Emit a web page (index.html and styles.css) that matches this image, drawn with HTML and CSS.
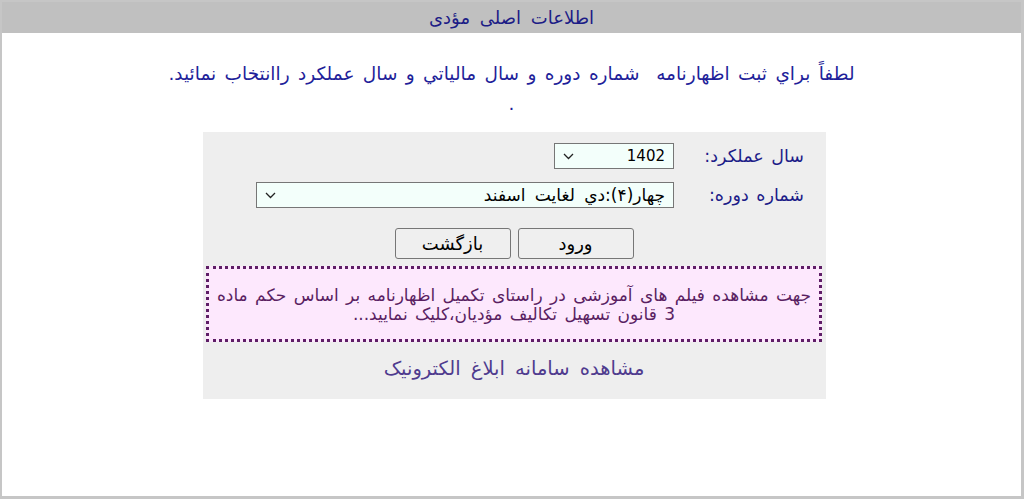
FILE: index.html
```html
<!DOCTYPE html>
<html lang="fa" dir="rtl">
<head>
<meta charset="utf-8">
<title>اطلاعات اصلی مؤدی</title>
<link rel="stylesheet" href="styles.css">
</head>
<body>
<div class="frame">
  <div class="header">اطلاعات اصلی مؤدی</div>
  <div class="intro">
    <p class="intro-line">لطفاً براي ثبت اظهارنامه&nbsp; شماره دوره و سال مالياتي و سال عملكرد راانتخاب نمائيد.</p>
    <p class="intro-dot">.</p>
  </div>
  <div class="panel">
    <div class="form-grid">
      <label class="label" for="year">سال عملكرد:</label>
      <div class="field">
        <div class="select-wrap year">
          <select id="year" class="select num"><option>1402</option></select>
          <svg class="chev" width="11" height="7" viewBox="0 0 11 7"><path d="M1 1 L5.5 5.5 L10 1" fill="none" stroke="#222" stroke-width="1.3"/></svg>
        </div>
      </div>
      <label class="label" for="period">شماره دوره:</label>
      <div class="field">
        <div class="select-wrap period">
          <select id="period" class="select fa"><option>چهار(۴):دي لغايت اسفند</option></select>
          <svg class="chev" width="11" height="7" viewBox="0 0 11 7"><path d="M1 1 L5.5 5.5 L10 1" fill="none" stroke="#222" stroke-width="1.3"/></svg>
        </div>
      </div>
    </div>
    <div class="buttons">
      <button class="btn" type="button">ورود</button>
      <button class="btn" type="button">بازگشت</button>
    </div>
    <div class="notice">جهت مشاهده فيلم های آموزشی در راستای تکميل اظهارنامه بر اساس حكم ماده<br>3 قانون تسهيل تكاليف مؤديان،كليک نماييد...</div>
    <div class="link">مشاهده سامانه ابلاغ الكترونيک</div>
  </div>
</div>
</body>
</html>
```
FILE: styles.css
```css
html, body {
  margin: 0;
  padding: 0;
  background: #ffffff;
}
body {
  font-family: "DejaVu Sans", "Liberation Sans", sans-serif;
}
.frame {
  box-sizing: border-box;
  width: 1024px;
  height: 499px;
  border: 2px solid #c6c6c6;
  border-right-width: 3px;
  border-bottom-width: 3px;
  background: #ffffff;
}
.header {
  background: #c0c0c0;
  height: 31px;
  line-height: 32px;
  text-align: center;
  color: #1c1c86;
  font-size: 18px;
  word-spacing: 4px;
}
.intro {
  text-align: center;
  color: #1f1f9a;
  font-size: 18.5px;
  word-spacing: 2.5px;
  padding-top: 26px;
  height: 99px;
  box-sizing: border-box;
}
.intro-line {
  margin: 0;
  line-height: 30px;
}
.intro-dot {
  margin: 0;
  line-height: 30px;
}
.panel {
  width: 623px;
  height: 267px;
  margin-right: 195px;
  margin-left: auto;
  background: #eeeeee;
  box-sizing: border-box;
  padding: 11px 4px 0 3px;
}
.form-grid {
  display: grid;
  grid-template-columns: 148px 1fr;
  row-gap: 13px;
  align-items: center;
}
.label {
  color: #1c1c88;
  font-size: 17.5px;
  word-spacing: 2px;
  padding-right: 18px;
  line-height: 26px;
}
.field {
  display: flex;
}
.select-wrap {
  position: relative;
  height: 26px;
}
.select-wrap.year { width: 120px; }
.select-wrap.period { width: 418px; }
.select {
  appearance: none;
  -webkit-appearance: none;
  box-sizing: border-box;
  width: 100%;
  height: 26px;
  border: 1px solid #767676;
  border-radius: 0;
  background: #f3fffb;
  color: #000;
  font-family: "DejaVu Sans", "Liberation Sans", sans-serif;
  padding: 0 8px 0 28px;
  direction: rtl;
}
.select.num { font-size: 15px; }
.select.fa { font-size: 17px; word-spacing: 4px; }
.chev {
  position: absolute;
  left: 9px;
  top: 10px;
}
.buttons {
  display: flex;
  justify-content: center;
  gap: 7px;
  margin-top: 20px;
}
.btn {
  width: 116px;
  height: 31px;
  box-sizing: border-box;
  border: 1px solid #767676;
  border-radius: 3px;
  background: #efefef;
  color: #000;
  font-family: "DejaVu Sans", "Liberation Sans", sans-serif;
  font-size: 18px;
  padding: 0;
}
.notice {
  margin-top: 7px;
  height: 76px;
  box-sizing: border-box;
  border: 3px dotted #5e1e66;
  background: #fde8fd;
  color: #5a1f62;
  text-align: center;
  font-size: 17px;
  word-spacing: 2px;
  line-height: 19px;
  padding-top: 17px;
  white-space: nowrap;
  overflow: hidden;
}
.link {
  text-align: center;
  color: #4f3b8e;
  font-size: 19.5px;
  word-spacing: 4px;
  margin-top: 16px;
  line-height: 22px;
}
```
